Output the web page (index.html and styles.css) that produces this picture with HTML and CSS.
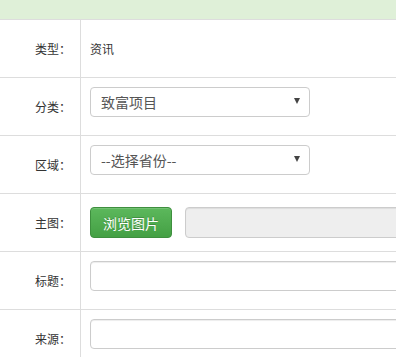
FILE: index.html
```html
<!DOCTYPE html>
<html lang="zh-CN">
<head>
  <meta charset="UTF-8" />
  <title>编辑资讯</title>
  <link rel="stylesheet" href="styles.css">
</head>
<body>
  <div class="top-bar"></div>

  <table class="form-table">
    <tr>
      <td class="label">类型：</td>
      <td class="field">资讯</td>
    </tr>
    <tr>
      <td class="label">分类：</td>
      <td class="field">
        <div class="select"><span>致富项目</span><i class="caret"></i></div>
      </td>
    </tr>
    <tr>
      <td class="label">区域：</td>
      <td class="field">
        <div class="select"><span>--选择省份--</span><i class="caret"></i></div>
      </td>
    </tr>
    <tr>
      <td class="label">主图：</td>
      <td class="field">
        <div class="upload">
          <button class="btn-success">浏览图片</button>
          <input class="path" type="text" disabled />
        </div>
      </td>
    </tr>
    <tr>
      <td class="label">标题：</td>
      <td class="field"><input class="text" type="text" /></td>
    </tr>
    <tr>
      <td class="label">来源：</td>
      <td class="field"><input class="text" type="text" /></td>
    </tr>
  </table>
</body>
</html>
```

FILE: styles.css
```css
html {
  overflow: hidden;
}

body {
  margin: 0;
  width: 520px;
  font-family: "Noto Sans CJK SC", "Noto Sans", sans-serif;
  color: #333;
  background: #fff;
}

/* green strip on top */
.top-bar {
  height: 19px;
  background: #dff0d8;
  border-bottom: 1px solid #ddd;
}

.form-table {
  border-collapse: collapse;
  width: 100%;
}

.form-table td {
  height: 57px;
  padding: 0;
  border-bottom: 1px solid #ddd;
  vertical-align: middle;
}

.label {
  width: 71px;
  padding-right: 9px !important;
  border-right: 1px solid #ddd;
  text-align: right;
  font-size: 12px;
  color: #333;
}

.field {
  padding-left: 9px !important;
  font-size: 12px;
}

.select {
  display: flex;
  align-items: center;
  justify-content: space-between;
  box-sizing: border-box;
  width: 220px;
  height: 30px;
  margin-bottom: 10px;
  padding: 0 9px 0 10px;
  border: 1px solid #ccc;
  border-radius: 4px;
  font-size: 14px;
  color: #555;
}

.caret {
  width: 0;
  height: 0;
  border-left: 3px solid transparent;
  border-right: 3px solid transparent;
  border-top: 6px solid #444;
  margin-top: -2px;
}

.upload {
  display: flex;
  gap: 13px;
}

.btn-success {
  width: 82px;
  height: 31px;
  border: 1px solid #3e8f3e;
  border-radius: 4px;
  background: linear-gradient(#5cb85c, #44a044);
  color: #fff;
  font-family: inherit;
  font-size: 14px;
  padding: 0;
  text-shadow: 0 -1px 0 rgba(0, 0, 0, 0.2);
  box-shadow: inset 0 1px 0 rgba(255, 255, 255, 0.15);
}

.path, .text {
  box-sizing: border-box;
  height: 30px;
  border: 1px solid #ccc;
  border-radius: 4px;
  box-shadow: inset 0 1px 1px rgba(0, 0, 0, 0.075);
  font-family: inherit;
  font-size: 14px;
}

.path {
  width: 300px;
  height: 31px;
  background: #eee;
}

.text {
  display: block;
  width: 380px;
  margin-bottom: 10px;
  background: #fff;
}
```
